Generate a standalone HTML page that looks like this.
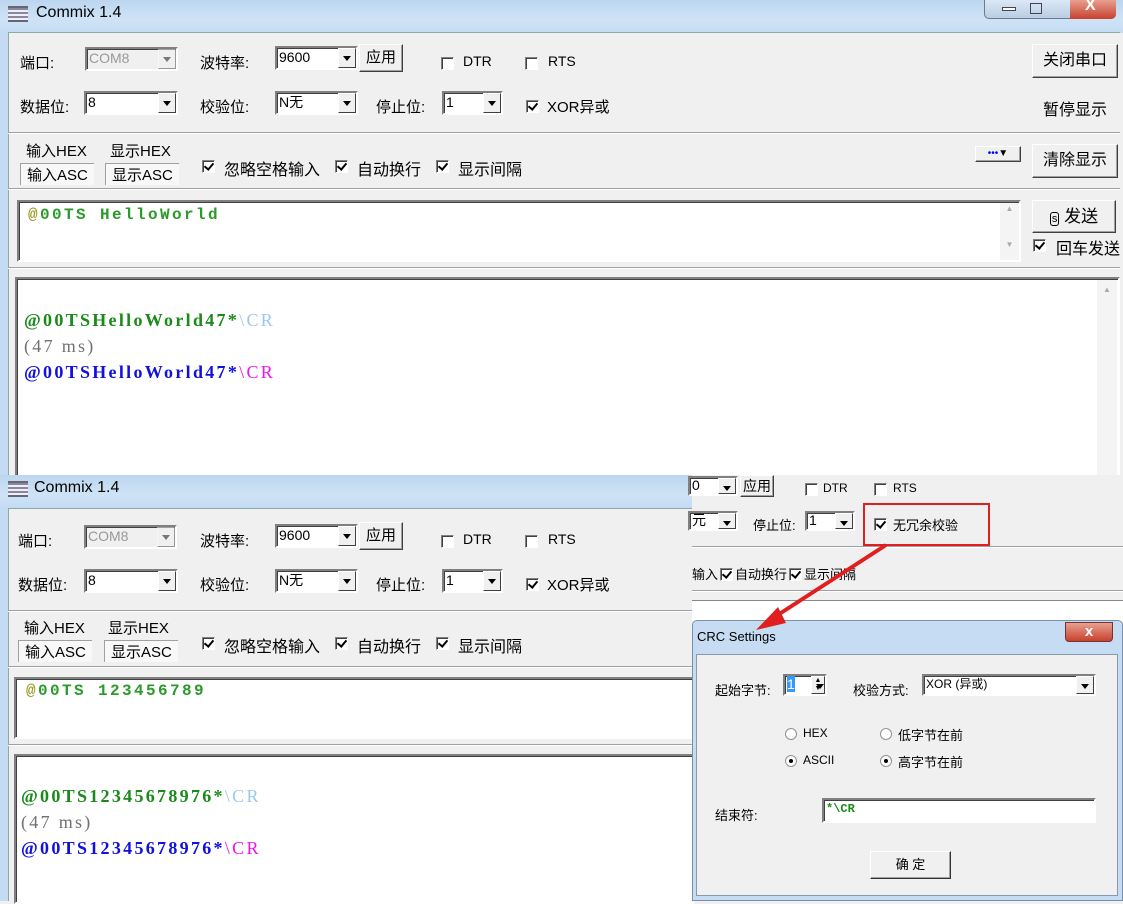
<!DOCTYPE html>
<html><head><meta charset="utf-8"><style>
*{box-sizing:border-box;margin:0;padding:0}
body{width:1123px;height:901px;position:relative;overflow:hidden;background:#f0f0f0;font-family:"Liberation Sans","Noto Sans CJK SC",sans-serif;font-size:15px;color:#000}
.a{position:absolute;white-space:nowrap}
.tb{background:linear-gradient(#bcd6ef,#cfe3f6 60%,#c3dbf2)}
.cb{position:absolute;background:#fff;border:2px solid;border-color:#808080 #fff #fff #808080;box-shadow:inset 1px 1px #404040;font-size:14px;padding-left:2px;line-height:18px}
.cb .ar{position:absolute;right:0;top:0;bottom:0;width:18px;background:#f0f0f0;border:1px solid;border-color:#fff #404040 #404040 #fff}
.cb .ar:after{content:"";position:absolute;left:4px;top:7px;border:4px solid transparent;border-top:5px solid #000;border-bottom:0}
.btn{position:absolute;background:#f0f0f0;border:1px solid;border-color:#fff #404040 #404040 #fff;box-shadow:inset -1px -1px #a0a0a0;text-align:center}
.ck{position:absolute;width:13px;height:13px;background:#fff;border:1px solid;border-color:#808080 #fff #fff #808080;box-shadow:inset 1px 1px #404040}
.ck.on:after{content:"";position:absolute;left:3px;top:0px;width:4px;height:7px;border-right:2px solid #000;border-bottom:2px solid #000;transform:rotate(40deg)}
.il{position:relative;display:inline-block;top:2px;margin:0 2px}
.sep{position:absolute;height:2px;border-top:1px solid #a0a0a0;border-bottom:1px solid #fff}
.box{position:absolute;background:#fff;border:2px solid;border-color:#808080 #fff #fff #808080;box-shadow:inset 1px 1px #404040}
.mono{font-family:"Liberation Mono",monospace;font-weight:bold}
.sr{font-family:"Liberation Serif",serif;font-weight:bold;font-size:18px;letter-spacing:2.3px}
.rd{position:absolute;width:12px;height:12px;border-radius:50%;background:#fff;border:1px solid #909090}
</style></head><body>

<!-- TOP WINDOW -->
<div class="a tb" style="left:0;top:0;width:1123px;height:33px"></div>
<div class="a" style="left:8px;top:6px;width:20px;height:16px;border-top:2px solid #667;border-bottom:2px solid #667;background:repeating-linear-gradient(#889 0 2px,#eef 2px 4px)"></div>
<div class="a" style="left:36px;top:4px;font-size:16px">Commix 1.4</div>
<div class="a" style="left:984px;top:0;width:132px;height:19px;border:1px solid #6a7a90;border-top:0;border-radius:0 0 5px 5px;background:linear-gradient(#dce8f5,#b9cde4)"></div>
<div class="a" style="left:1070px;top:0;width:46px;height:19px;background:linear-gradient(#e8a090,#c8412e);border-radius:0 0 5px 0"></div>
<div class="a" style="left:1085px;top:-3px;color:#fff;font-weight:bold;font-size:16px">X</div>
<div class="a" style="left:1002px;top:7px;width:14px;height:4px;border:1px solid #445;background:#fff"></div>
<div class="a" style="left:1030px;top:3px;width:12px;height:11px;border:1px solid #445"></div>
<div class="a" style="left:0;top:33px;width:8px;height:442px;background:#c5dbf1"></div>
<div class="a" style="left:8px;top:32px;width:1112px;height:443px;background:#f0f0f0;border-left:1px solid #8aa;border-top:1px solid #8aa"></div>

<div class="a" style="left:20px;top:52px">端口:</div>
<div class="cb" style="left:85px;top:47px;width:93px;height:24px;color:#999;background:#f0f0f0">COM8<div class="ar" style="opacity:.5"></div></div>
<div class="a" style="left:200px;top:52px">波特率:</div>
<div class="cb" style="left:275px;top:46px;width:83px;height:24px">9600<div class="ar"></div></div>
<div class="btn" style="left:359px;top:44px;width:44px;height:28px;line-height:26px">应用</div>
<div class="ck" style="left:441px;top:57px"></div><div class="a" style="left:463px;top:53px;font-size:14px">DTR</div>
<div class="ck" style="left:525px;top:57px"></div><div class="a" style="left:548px;top:53px;font-size:14px">RTS</div>
<div class="btn" style="left:1032px;top:44px;width:86px;height:34px;line-height:32px;font-size:16px">关闭串口</div>

<div class="a" style="left:20px;top:96px">数据位:</div>
<div class="cb" style="left:84px;top:91px;width:94px;height:24px">8<div class="ar"></div></div>
<div class="a" style="left:200px;top:96px">校验位:</div>
<div class="cb" style="left:275px;top:91px;width:83px;height:24px">N无<div class="ar"></div></div>
<div class="a" style="left:376px;top:96px">停止位:</div>
<div class="cb" style="left:442px;top:91px;width:61px;height:24px">1<div class="ar"></div></div>
<div class="ck on" style="left:526px;top:100px"></div><div class="a" style="left:547px;top:96px">XOR异或</div>
<div class="a" style="left:1043px;top:96px;font-size:16px">暂停显示</div>
<div class="sep" style="left:8px;top:132px;width:1112px"></div>

<div class="a" style="left:26px;top:140px">输入HEX</div>
<div class="a" style="left:110px;top:140px">显示HEX</div>
<div class="a" style="left:20px;top:163px;width:74px;height:22px;border-left:1px solid #a0a0a0;border-top:1px solid #a0a0a0;background:#f8f8f8;padding-left:6px">输入ASC</div>
<div class="a" style="left:105px;top:163px;width:74px;height:22px;border-left:1px solid #a0a0a0;border-top:1px solid #a0a0a0;background:#f8f8f8;padding-left:6px">显示ASC</div>
<div class="ck on" style="left:202px;top:160px"></div><div class="a" style="left:224px;top:156px;font-size:16px">忽略空格输入</div>
<div class="ck on" style="left:335px;top:160px"></div><div class="a" style="left:357px;top:156px;font-size:16px">自动换行</div>
<div class="ck on" style="left:436px;top:160px"></div><div class="a" style="left:458px;top:156px;font-size:16px">显示间隔</div>
<div class="btn" style="left:975px;top:146px;width:46px;height:16px;font-size:10px;line-height:13px"><span style="color:#00f">•••</span>▼</div>
<div class="btn" style="left:1032px;top:144px;width:86px;height:34px;line-height:32px;font-size:16px">清除显示</div>
<div class="sep" style="left:8px;top:188px;width:1112px"></div>

<div class="box" style="left:17px;top:200px;width:1004px;height:62px"></div>
<div class="a" style="left:1000px;top:203px;width:19px;height:57px;background:#f4f4f4;color:#aaa;font-size:8px;text-align:center;line-height:12px">▲<br><br><br>▼</div>
<div class="a mono" style="left:28px;top:206px;font-size:16px;letter-spacing:2.4px;color:#2a9a2a"><span style="color:#9a9a20">@</span>00TS HelloWorld</div>
<div class="btn" style="left:1032px;top:200px;width:84px;height:33px;line-height:31px;font-size:17px"><span style="font-size:11px;border:1px solid #000;border-radius:3px;padding:0 1px">s</span> 发送</div>
<div class="ck on" style="left:1033px;top:239px"></div><div class="a" style="left:1056px;top:235px;font-size:16px">回车发送</div>
<div class="sep" style="left:8px;top:267px;width:1112px"></div>

<div class="box" style="left:15px;top:277px;width:1105px;height:200px"></div>
<div class="a" style="left:1097px;top:280px;width:20px;height:195px;background:#f4f4f4;color:#aaa;font-size:8px;text-align:center;line-height:20px">▲</div>
<div class="a sr" style="left:24px;top:310px;color:#1a8a1a">@00TSHelloWorld47*<span style="color:#9cc8f0;font-weight:normal">\CR</span></div>
<div class="a sr" style="left:24px;top:336px;color:#707070;font-weight:normal">(47 ms)</div>
<div class="a sr" style="left:24px;top:362px;color:#1010e0">@00TSHelloWorld47*<span style="color:#f010f0;font-weight:normal">\CR</span></div>

<!-- BOTTOM WINDOW LEFT -->
<div class="a tb" style="left:0;top:475px;width:692px;height:33px"></div>
<div class="a" style="left:8px;top:481px;width:20px;height:16px;border-top:2px solid #667;border-bottom:2px solid #667;background:repeating-linear-gradient(#889 0 2px,#eef 2px 4px)"></div>
<div class="a" style="left:34px;top:479px;font-size:16px">Commix 1.4</div>
<div class="a" style="left:0;top:508px;width:8px;height:393px;background:#c5dbf1"></div>
<div class="a" style="left:8px;top:508px;width:684px;height:393px;background:#f0f0f0;border-left:1px solid #8aa;border-top:1px solid #8aa"></div>

<div class="a" style="left:18px;top:530px">端口:</div>
<div class="cb" style="left:84px;top:525px;width:93px;height:24px;color:#999;background:#f0f0f0">COM8<div class="ar" style="opacity:.5"></div></div>
<div class="a" style="left:200px;top:530px">波特率:</div>
<div class="cb" style="left:275px;top:524px;width:83px;height:24px">9600<div class="ar"></div></div>
<div class="btn" style="left:359px;top:522px;width:44px;height:28px;line-height:26px">应用</div>
<div class="ck" style="left:441px;top:535px"></div><div class="a" style="left:463px;top:531px;font-size:14px">DTR</div>
<div class="ck" style="left:525px;top:535px"></div><div class="a" style="left:548px;top:531px;font-size:14px">RTS</div>
<div class="a" style="left:18px;top:574px">数据位:</div>
<div class="cb" style="left:84px;top:569px;width:94px;height:24px">8<div class="ar"></div></div>
<div class="a" style="left:200px;top:574px">校验位:</div>
<div class="cb" style="left:275px;top:569px;width:83px;height:24px">N无<div class="ar"></div></div>
<div class="a" style="left:376px;top:574px">停止位:</div>
<div class="cb" style="left:442px;top:569px;width:61px;height:24px">1<div class="ar"></div></div>
<div class="ck on" style="left:526px;top:578px"></div><div class="a" style="left:547px;top:574px">XOR异或</div>
<div class="sep" style="left:8px;top:610px;width:684px"></div>
<div class="a" style="left:24px;top:617px">输入HEX</div>
<div class="a" style="left:108px;top:617px">显示HEX</div>
<div class="a" style="left:18px;top:640px;width:74px;height:22px;border-left:1px solid #a0a0a0;border-top:1px solid #a0a0a0;background:#f8f8f8;padding-left:6px">输入ASC</div>
<div class="a" style="left:104px;top:640px;width:74px;height:22px;border-left:1px solid #a0a0a0;border-top:1px solid #a0a0a0;background:#f8f8f8;padding-left:6px">显示ASC</div>
<div class="ck on" style="left:202px;top:637px"></div><div class="a" style="left:224px;top:633px;font-size:16px">忽略空格输入</div>
<div class="ck on" style="left:335px;top:637px"></div><div class="a" style="left:357px;top:633px;font-size:16px">自动换行</div>
<div class="ck on" style="left:436px;top:637px"></div><div class="a" style="left:458px;top:633px;font-size:16px">显示间隔</div>
<div class="sep" style="left:8px;top:666px;width:684px"></div>
<div class="box" style="left:14px;top:677px;width:680px;height:62px"></div>
<div class="a mono" style="left:26px;top:682px;font-size:16px;letter-spacing:2.4px;color:#2a9a2a"><span style="color:#9a9a20">@</span>00TS 123456789</div>
<div class="sep" style="left:8px;top:744px;width:684px"></div>
<div class="box" style="left:14px;top:754px;width:680px;height:150px"></div>
<div class="a sr" style="left:21px;top:786px;color:#1a8a1a">@00TS12345678976*<span style="color:#9cc8f0;font-weight:normal">\CR</span></div>
<div class="a sr" style="left:21px;top:812px;color:#707070;font-weight:normal">(47 ms)</div>
<div class="a sr" style="left:21px;top:838px;color:#1010e0">@00TS12345678976*<span style="color:#f010f0;font-weight:normal">\CR</span></div>

<!-- RIGHT PIECE -->
<div class="a" style="left:692px;top:475px;width:431px;height:426px;background:#f0f0f0"></div>
<div class="cb" style="left:688px;top:476px;width:50px;height:20px;line-height:14px">0<div class="ar"></div></div>
<div class="btn" style="left:740px;top:475px;width:34px;height:22px;font-size:14px;line-height:20px">应用</div>
<div class="ck" style="left:805px;top:483px"></div><div class="a" style="left:823px;top:481px;font-size:12px">DTR</div>
<div class="ck" style="left:874px;top:483px"></div><div class="a" style="left:893px;top:481px;font-size:12px">RTS</div>
<div class="cb" style="left:688px;top:511px;width:50px;height:20px;line-height:14px">元<div class="ar"></div></div>
<div class="a" style="left:753px;top:515px;font-size:13px">停止位:</div>
<div class="cb" style="left:805px;top:511px;width:50px;height:20px;line-height:14px">1<div class="ar"></div></div>
<div class="ck on" style="left:874px;top:518px"></div><div class="a" style="left:893px;top:515px;font-size:13px">无冗余校验</div>
<div class="a" style="left:863px;top:503px;width:127px;height:43px;border:2px solid #e02020"></div>
<div class="sep" style="left:692px;top:546px;width:431px"></div>
<div class="a" style="left:692px;top:564px;font-size:13px">输入<span class="ck on il"></span>自动换行<span class="ck on il"></span>显示间隔</div>
<div class="sep" style="left:692px;top:590px;width:431px"></div>
<div class="a" style="left:692px;top:600px;width:431px;height:22px;background:#fff;border-top:1px solid #888"></div>

<!-- DIALOG -->
<div class="a" style="left:692px;top:620px;width:431px;height:281px;background:#c6dcf2;border:1px solid #7a90aa;border-radius:5px 5px 0 0"></div>
<div class="a" style="left:697px;top:629px;font-size:13px">CRC Settings</div>
<div class="a" style="left:1065px;top:622px;width:48px;height:20px;background:linear-gradient(#e8a090,#c8412e);border:1px solid #733;border-radius:0 0 4px 4px;color:#fff;font-weight:bold;text-align:center;line-height:18px">x</div>
<div class="a" style="left:696px;top:654px;width:422px;height:242px;background:#f0f0f0;border:1px solid #8899aa"></div>
<div class="a" style="left:715px;top:680px;font-size:13px">起始字节:</div>
<div class="cb" style="left:783px;top:674px;width:44px;height:22px;line-height:16px"><span style="background:#3399ff;color:#fff">1</span><div class="ar" style="width:14px;font-size:7px;text-align:center;line-height:8px">▲<br>▼</div></div>
<div class="a" style="left:853px;top:680px;font-size:13px">校验方式:</div>
<div class="cb" style="left:922px;top:674px;width:174px;height:22px;line-height:16px;font-size:12px">XOR (异或)<div class="ar"></div></div>
<div class="rd" style="left:785px;top:728px"></div><div class="a" style="left:803px;top:726px;font-size:12px">HEX</div>
<div class="rd" style="left:785px;top:755px"></div><div class="a" style="left:789px;top:759px;width:4px;height:4px;background:#000;border-radius:50%"></div><div class="a" style="left:803px;top:753px;font-size:12px">ASCII</div>
<div class="rd" style="left:880px;top:728px"></div><div class="a" style="left:898px;top:725px;font-size:13px">低字节在前</div>
<div class="rd" style="left:880px;top:755px"></div><div class="a" style="left:884px;top:759px;width:4px;height:4px;background:#000;border-radius:50%"></div><div class="a" style="left:898px;top:752px;font-size:13px">高字节在前</div>
<div class="a" style="left:715px;top:805px;font-size:13px">结束符:</div>
<div class="box" style="left:822px;top:798px;width:274px;height:25px"></div>
<div class="a mono" style="left:826px;top:802px;font-size:12px;color:#1a8a1a">*\CR</div>
<div class="btn" style="left:870px;top:851px;width:81px;height:28px;line-height:26px;font-size:13px;border-color:#fff #333 #333 #fff">确 定</div>

<svg class="a" style="left:0;top:0" width="1123" height="901">
<line x1="886" y1="545" x2="770" y2="620" stroke="#e02020" stroke-width="4"/>
<polygon points="756,630 778,607 786,623" fill="#e02020"/>
</svg>
</body></html>
